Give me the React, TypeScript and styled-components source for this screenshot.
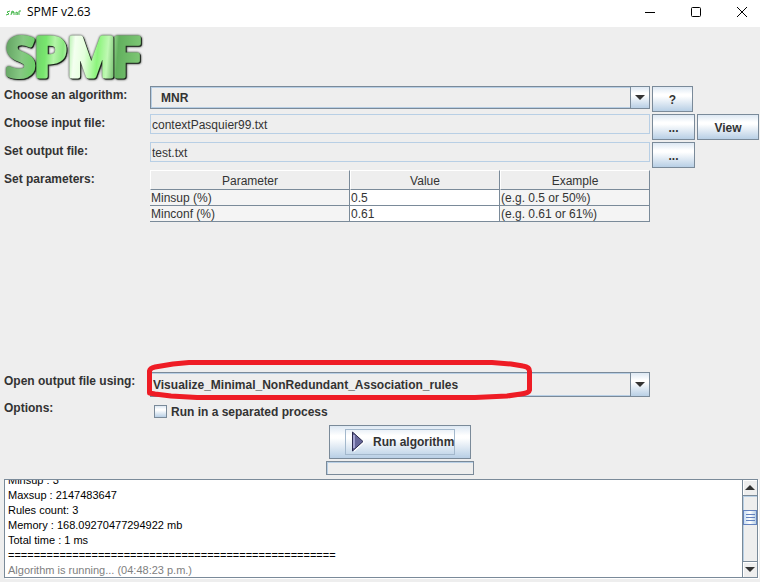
import React from "react";
import styled, { createGlobalStyle } from "styled-components";

const steel = "#7a8a99";
const sky = "#b8cfe5";
const panel = "#eeeeee";
const ink = "#333333";
const sheen = "linear-gradient(#dde8f3 0%, #ffffff 30%, #ffffff 38%, #b8cfe5 100%)";

const GlobalStyle = createGlobalStyle`
  *, *::before, *::after { box-sizing: border-box; }
  body {
    margin: 0;
    background: ${panel};
    color: ${ink};
    font: 12px/14px "Liberation Sans", Arial, sans-serif;
  }
  button, input, select { font: inherit; color: inherit; margin: 0; border-radius: 0; }
`;

const TitleBar = styled.header`
  display: flex;
  align-items: center;
  height: 27px;
  padding-left: 6px;
  background: #fff;
  color: #000;
`;

const Title = styled.h1`
  flex: 1;
  margin: 0 0 0 6px;
  padding-bottom: 3px;
  font: 400 12px/16px "Open Sans", "Noto Sans", sans-serif;
`;

const WindowButton = styled.button`
  display: flex;
  align-items: center;
  justify-content: center;
  width: 46px;
  height: 23px;
  padding: 0;
  border: 0;
  background: none;
  align-self: flex-start;

  &:last-child { margin-right: -5px; }
`;

const Brand = styled.div`
  height: 59px;
  padding-left: 4px;

  svg { display: block; overflow: visible; }
`;

const LogoText = styled.text`
  font: 600 53px "Open Sans", sans-serif;
  fill: url(#leaf);
  stroke: url(#leaf);
  stroke-width: 5px;
  stroke-linejoin: round;
  filter: drop-shadow(1px 1px 0 #1c241c) drop-shadow(0 0 1px #1c241c);
`;

const Form = styled.form`
  display: grid;
  grid-template-columns: 146px minmax(0, 1fr) 109px;
  align-items: start;
  padding: 0 1px 0 4px;
`;

const Label = styled.label`
  grid-column: 1;
  padding-top: 2px;
  font-weight: bold;
`;

const Field = styled.div<{ $height?: number }>`
  grid-column: 2;
  position: relative;
  min-height: ${(p) => p.$height ?? 28}px;
`;

const Buttons = styled.div`
  display: flex;
  gap: 2px;
  padding-left: 2px;
`;

const Button = styled.button<{ $width: number }>`
  width: ${(p) => p.$width}px;
  height: 26px;
  padding: 2px 0 0;
  border: 1px solid ${steel};
  background: ${sheen};
  font-weight: bold;
`;

const Combo = styled.div<{ $height: number }>`
  display: grid;
  grid-template-columns: minmax(0, 1fr) 20px;
  height: ${(p) => p.$height}px;
`;

const Select = styled.select<{ $indent: number }>`
  grid-area: 1 / 1 / 2 / 3;
  width: 100%;
  height: 100%;
  padding: 0 24px 0 ${(p) => p.$indent}px;
  border: 1px solid ${steel};
  box-shadow: inset 0 0 0 1px ${sky};
  background: ${panel};
  appearance: none;
  font-weight: bold;
`;

const ComboArrow = styled.span`
  grid-area: 1 / 2 / 2 / 3;
  z-index: 1;
  display: flex;
  align-items: center;
  justify-content: center;
  border: 1px solid ${steel};
  background: ${sheen};
  pointer-events: none;
`;

const Highlight = styled.svg`
  position: absolute;
  left: -5px;
  top: -13px;
  z-index: 2;
  pointer-events: none;
`;

const TextField = styled.input`
  display: block;
  width: 100%;
  height: 20px;
  padding: 2px 1px 0;
  border: 1px solid ${sky};
  background: ${panel};
`;

const Table = styled.table`
  width: 100%;
  table-layout: fixed;
  border-spacing: 0;

  th, td {
    padding: 0 1px;
    border-right: 1px solid ${steel};
    border-bottom: 1px solid ${steel};
    text-align: left;
  }
  th {
    height: 20px;
    padding-top: 2px;
    border-top: 1px solid #fff;
    border-left: 1px solid #fff;
    font-weight: normal;
    text-align: center;
  }
  th:first-child { width: 40%; }
  td {
    height: 16px;
    padding-top: 1px;
    background: #f4f4f4;
    line-height: 14px;
  }
`;

const CellInput = styled.input`
  display: block;
  width: 100%;
  height: 15px;
  padding: 1px 1px 0;
  border: 0;
  background: #fff;
`;

const ValueCell = styled.td`
  && { padding: 0; background: #fff; }
`;

const CheckLabel = styled.label`
  display: flex;
  align-items: flex-start;
  gap: 4px;
  padding: 6px 0 0 4px;
  font-weight: bold;
`;

const Checkbox = styled.input`
  width: 13px;
  height: 13px;
  appearance: none;
  border: 1px solid ${steel};
  background: ${sheen};

  &:checked { box-shadow: inset 0 0 0 3px #fff; background: ${ink}; }
`;

const RunArea = styled.div`
  grid-column: 2;
  display: flex;
  flex-direction: column;
  align-items: center;
  gap: 2px;
`;

const RunButton = styled.button`
  display: flex;
  align-items: center;
  width: 142px;
  height: 34px;
  padding: 3px 15px;
  border: 1px solid ${steel};
  background: ${sheen};
  font-weight: bold;
`;

const RunFocus = styled.span`
  display: flex;
  flex: 1;
  align-items: center;
  gap: 8px;
  height: 26px;
  padding-left: 6px;
  border: 1px solid #a3b8cc;
  white-space: nowrap;
`;

const Progress = styled.div`
  width: 148px;
  height: 14px;
  border: 1px solid ${steel};
  box-shadow: inset 1px 1px 0 ${sky};
`;

const Console = styled.section`
  display: flex;
  height: 99px;
  margin: 4px 2px 4px 4px;
  border: 1px solid ${steel};
  background: #fff;
  color: #000;
  box-shadow: 1px 1px 0 #fff;
`;

const Log = styled.div`
  display: flex;
  flex: 1;
  flex-direction: column;
  overflow: hidden;
  justify-content: flex-end;
  padding-left: 3px;
  font-size: 11px;
  line-height: 15px;
`;

const LogLine = styled.div<{ $muted?: boolean }>`
  flex: none;
  height: 15px;
  padding-top: 1px;
  color: ${(p) => (p.$muted ? "#808080" : "#000")};
`;

const ScrollBar = styled.div`
  display: flex;
  flex-direction: column;
  width: 15px;
  border-left: 1px solid ${steel};
  background: ${panel};
`;

const ScrollButton = styled.button<{ $down?: boolean }>`
  display: flex;
  align-items: center;
  justify-content: center;
  height: 16px;
  padding: 0;
  border: 0 solid ${steel};
  border-width: ${(p) => (p.$down ? "1px 0 0" : "0 0 1px")};
  background: ${panel};
  box-shadow: inset 1px 1px 0 #fff;
`;

const Track = styled.div`
  flex: 1;
  padding-top: 14px;
  box-shadow: inset 1px 1px 0 ${sky};
`;

const Thumb = styled.div`
  display: flex;
  flex-direction: column;
  align-items: center;
  justify-content: center;
  gap: 2px;
  height: 15px;
  border: 1px solid #6382bf;
  background: linear-gradient(90deg, #c8ddf2, #fff 50%, #b8cfe5);

  i { width: 9px; height: 1px; background: #6382bf; }
`;

const Triangle = ({ up = false }: { up?: boolean }) => (
  <svg width="10" height="5" viewBox="0 0 10 5" aria-hidden="true">
    <path d={up ? "M5 0L10 5H0Z" : "M0 0H10L5 5Z"} fill={ink} />
  </svg>
);

const Logo = () => (
  <svg width="144" height="59" viewBox="0 0 144 59" role="img" aria-label="SPMF">
    <defs>
      <linearGradient id="leaf" x1="0" y1="0" x2="144" y2="12" gradientUnits="userSpaceOnUse">
        <stop offset="0" stopColor="#5c9c5c" />
        <stop offset="0.14" stopColor="#86c883" />
        <stop offset="0.22" stopColor="#6fce69" />
        <stop offset="0.3" stopColor="#78e66e" />
        <stop offset="0.36" stopColor="#b4f4a8" />
        <stop offset="0.42" stopColor="#8ae880" />
        <stop offset="0.5" stopColor="#f4fff0" />
        <stop offset="0.57" stopColor="#e4ffdc" />
        <stop offset="0.66" stopColor="#8cf47c" />
        <stop offset="0.73" stopColor="#c0f8b4" />
        <stop offset="0.8" stopColor="#62b05e" />
        <stop offset="1" stopColor="#85cd7b" />
      </linearGradient>
    </defs>
    <LogoText y="49">
      <tspan x="2">S</tspan>
      <tspan x="30">P</tspan>
      <tspan x="63">M</tspan>
      <tspan x="108">F</tspan>
    </LogoText>
  </svg>
);

const parameters = [
  { name: "Minsup (%)", value: "0.5", example: "(e.g. 0.5 or 50%)" },
  { name: "Minconf (%)", value: "0.61", example: "(e.g. 0.61 or 61%)" },
];

const logLines = [
  "Minsup : 3",
  "Maxsup : 2147483647",
  "Rules count: 3",
  "Memory : 168.09270477294922 mb",
  "Total time : 1 ms",
  "===================================================",
];

export default function App() {
  return (
    <>
      <GlobalStyle />
      <TitleBar>
        <svg width="15" height="10" viewBox="0 0 15 10" aria-hidden="true">
          <path d="M4 2L1 3L3 5L0 6M5 6L6 2L8 3L6 4M8 6V3M10 6V3L12 4L11 6M13 6V2H15" fill="none" stroke="#43b649" />
        </svg>
        <Title>SPMF v2.63</Title>
        <WindowButton type="button" aria-label="Minimize">
          <svg width="10" height="10" viewBox="0 0 10 10"><path d="M0 5.5H10" stroke="#000" /></svg>
        </WindowButton>
        <WindowButton type="button" aria-label="Maximize">
          <svg width="10" height="10" viewBox="0 0 10 10"><rect x=".5" y=".5" width="9" height="9" rx="1" fill="none" stroke="#000" /></svg>
        </WindowButton>
        <WindowButton type="button" aria-label="Close">
          <svg width="10" height="10" viewBox="0 0 10 10"><path d="M0 0L10 10M10 0L0 10" stroke="#000" /></svg>
        </WindowButton>
      </TitleBar>

      <main>
        <Brand><Logo /></Brand>
        <Form onSubmit={(e) => e.preventDefault()}>
          <Label htmlFor="algorithm">Choose an algorithm:</Label>
          <Field>
            <Combo $height={23}>
              <Select id="algorithm" $indent={10}><option>MNR</option></Select>
              <ComboArrow><Triangle /></ComboArrow>
            </Combo>
          </Field>
          <Buttons><Button type="button" $width={41}>?</Button></Buttons>

          <Label htmlFor="input-file">Choose input file:</Label>
          <Field><TextField id="input-file" readOnly value="contextPasquier99.txt" /></Field>
          <Buttons>
            <Button type="button" $width={43}>...</Button>
            <Button type="button" $width={62}>View</Button>
          </Buttons>

          <Label htmlFor="output-file">Set output file:</Label>
          <Field><TextField id="output-file" readOnly value="test.txt" /></Field>
          <Buttons><Button type="button" $width={43}>...</Button></Buttons>

          <Label as="span" id="parameters">Set parameters:</Label>
          <Field $height={202}>
            <Table aria-labelledby="parameters">
              <thead>
                <tr><th>Parameter</th><th>Value</th><th>Example</th></tr>
              </thead>
              <tbody>
                {parameters.map((p) => (
                  <tr key={p.name}>
                    <td>{p.name}</td>
                    <ValueCell><CellInput aria-label={p.name} defaultValue={p.value} /></ValueCell>
                    <td>{p.example}</td>
                  </tr>
                ))}
              </tbody>
            </Table>
          </Field>

          <Label htmlFor="viewer">Open output file using:</Label>
          <Field $height={27}>
            <Combo $height={25}>
              <Select id="viewer" $indent={2}><option>Visualize_Minimal_NonRedundant_Association_rules</option></Select>
              <ComboArrow><Triangle /></ComboArrow>
            </Combo>
            <Highlight width="390" height="44" viewBox="0 0 390 44" aria-hidden="true">
              <path
                d="M4.500 34V12Q5 9 10 8L28 5L44 3.500H347L366 5L378 7Q385 8 384.500 13V31Q384 34 376 35L362 37L330 38.500H52L26 37L10 35Z"
                fill="none"
                stroke="#ee1c25"
                strokeWidth="5"
                strokeLinejoin="round"
              />
            </Highlight>
          </Field>

          <Label as="span">Options:</Label>
          <Field $height={26}>
            <CheckLabel><Checkbox type="checkbox" />Run in a separated process</CheckLabel>
          </Field>

          <RunArea>
            <RunButton type="submit">
              <RunFocus>
                <svg width="13" height="22" viewBox="0 0 13 22" aria-hidden="true">
                  <path d="M2 2V21L13 11" fill="#fff" />
                  <path d="M.5 1L11 10.500L.5 20Z" fill="#666699" stroke="#29294d" />
                  <path d="M2 4V17" stroke="#a3a3d1" strokeWidth="2" />
                </svg>
                Run algorithm
              </RunFocus>
            </RunButton>
            <Progress role="progressbar" aria-label="Progress" />
          </RunArea>
        </Form>

        <Console aria-label="Output">
          <Log role="log">
            {logLines.map((line) => <LogLine key={line}>{line}</LogLine>)}
            <LogLine $muted>Algorithm is running... (04:48:23 p.m.)</LogLine>
          </Log>
          <ScrollBar>
            <ScrollButton type="button" aria-label="Scroll up"><Triangle up /></ScrollButton>
            <Track><Thumb><i /><i /><i /></Thumb></Track>
            <ScrollButton type="button" aria-label="Scroll down" $down><Triangle /></ScrollButton>
          </ScrollBar>
        </Console>
      </main>
    </>
  );
}
